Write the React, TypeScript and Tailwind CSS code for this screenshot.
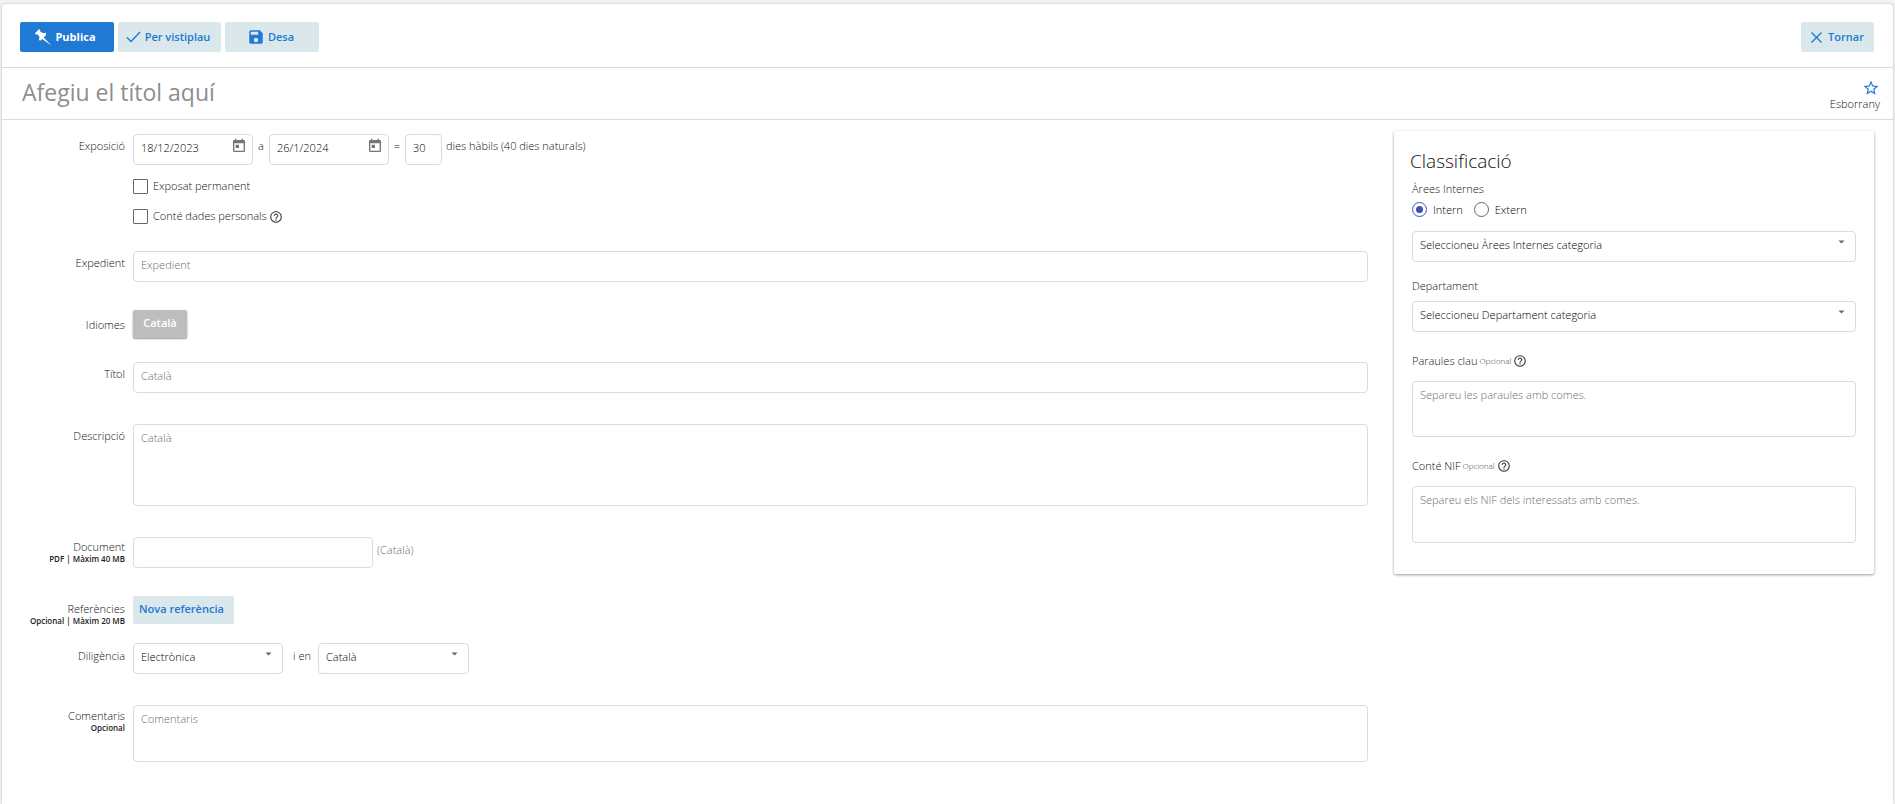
import React, { useState } from 'react';
import clsx from 'clsx';
import { MdHelpOutline, MdSave, MdStarBorder, MdToday } from 'react-icons/md';

const fieldClass =
  'w-full rounded border border-[#dcdcdc] bg-white px-[7px] text-[11px] text-black outline-none placeholder:text-[#6e6e6e]';
const inputClass = clsx(fieldClass, 'h-[31px] pb-[5px]');
const selectClass = clsx(fieldClass, 'h-[31px] pb-[3px] appearance-none');
const areaClass = clsx(fieldClass, 'block resize-none py-[5px] leading-4');
const headerButton = 'flex h-[30px] items-center justify-center rounded-xs text-[11px]';
const softColors = 'bg-[#dae7eb] font-semibold text-[#2079d3]';

interface FormRowProps {
  label: string;
  hint?: string;
  htmlFor?: string;
  className?: string;
  labelClassName?: string;
  children: React.ReactNode;
}

const FormRow = ({ label, hint, htmlFor, className, labelClassName = 'pt-[5px]', children }: FormRowProps) => {
  return (
    <div className={clsx('flex gap-2', className)}>
      <div className={clsx('w-[123px] shrink-0 text-right', labelClassName)}>
        <label htmlFor={htmlFor} className="block leading-[14px]">{label}</label>
        {hint && <span className="block text-[8px] leading-[10px] font-semibold text-[#222]">{hint}</span>}
      </div>
      <div className="min-w-0 flex-1">{children}</div>
    </div>
  );
};

interface SelectBoxProps {
  id: string;
  options: string[];
  label?: string;
  className?: string;
}

const SelectBox = ({ id, options, label, className }: SelectBoxProps) => {
  return (
    <div className={clsx('relative', className)}>
      <select id={id} aria-label={label} className={selectClass}>
        {options.map((option) => (
          <option key={option}>{option}</option>
        ))}
      </select>
      <svg className="pointer-events-none absolute top-[9px] right-[11px]" width="7" height="4" viewBox="0 0 7 4" fill="#666">
        <path d="M.5 .5h6L3.500 3.500z" />
      </svg>
    </div>
  );
};

const DateBox = ({ label, value }: { label: string; value: string }) => {
  return (
    <div className="relative w-[120px]">
      <input type="text" aria-label={label} defaultValue={value} className={inputClass} />
      <button type="button" aria-label="Obre el calendari" className="absolute top-1 right-[6px] text-[#757575]">
        <MdToday size={16} />
      </button>
    </div>
  );
};

const CheckBox = ({ id, label }: { id: string; label: string }) => {
  return (
    <>
      <input
        id={id}
        type="checkbox"
        className="size-[15px] appearance-none rounded-[1px] border border-[#666] bg-white checked:bg-[#3f51b5]"
      />
      <label htmlFor={id} className="ml-[5px]">{label}</label>
    </>
  );
};

const App = () => {
  const [area, setArea] = useState('Intern');

  return (
    <div className="min-h-screen bg-[#f4f4f4] px-0.5 pt-1 font-['Open_Sans',sans-serif] text-[11px] font-light text-[#111]">
      <div className="min-h-[800px] rounded-t bg-white shadow-[0_0_3px_rgba(0,0,0,0.25)]">
        <header className="flex h-16 items-center gap-1 border-b border-[#dcdcdc] pt-[3px] pr-[19px] pl-[18px]">
          <button type="button" className={clsx(headerButton, 'w-[94px] gap-[3px] bg-[#2079d3] pr-[3px] font-bold text-white')}>
            <svg width="17" height="17" viewBox="0 0 17 17" fill="currentColor">
              <path d="M4 .3l1 .5.4 2 3.200 1.500 1.900-.6.6.9-.2 1.700-2.200 2.200L16.700 16.700 7.200 10 5.200 11.700l-1.100-.6-.2-1.200.7-1.800L2.700 5.400.5 5.200 0 4.200z" />
            </svg>
            Publica
          </button>
          <button type="button" className={clsx(headerButton, softColors, 'w-[103px] gap-1 pr-[3px]')}>
            <svg width="15" height="12" viewBox="0 0 15 12" fill="none" stroke="currentColor" strokeWidth="1.400">
              <path d="M1 6.500l4 4L14 1" />
            </svg>
            Per vistiplau
          </button>
          <button type="button" className={clsx(headerButton, softColors, 'w-[94px] gap-[3px] pr-[3px]')}>
            <MdSave size={18} />
            Desa
          </button>
          <button type="button" className={clsx(headerButton, softColors, 'ml-auto w-[73px] gap-[6px]')}>
            <svg width="11" height="11" viewBox="0 0 11 11" fill="none" stroke="currentColor" strokeWidth="1.400">
              <path d="M.5.5l10 10M10.500.5l-10 10" />
            </svg>
            Tornar
          </button>
        </header>

        <div className="flex h-[52px] items-center border-b border-[#dcdcdc] pr-[13px] pl-5">
          <input
            type="text"
            aria-label="Títol de l'anunci"
            placeholder="Afegiu el títol aquí"
            className="flex-1 pb-0.5 text-[23px] font-normal outline-none placeholder:text-[#8e8e8e]"
          />
          <div className="flex flex-col items-end pt-0.5">
            <button type="button" aria-label="Preferit" className="text-[#2079d3]">
              <MdStarBorder size={18} />
            </button>
            <span className="leading-[14px]">Esborrany</span>
          </div>
        </div>

        <main className="flex items-start gap-[26px] pt-[11px] pr-[19px]">
          <form className="min-w-0 flex-1 pt-[3px]">
            <FormRow label="Exposició">
              <div className="flex">
                <DateBox label="Data inicial" value="18/12/2023" />
                <span className="w-4 pt-[5px] text-center leading-[14px]">a</span>
                <DateBox label="Data final" value="26/1/2024" />
                <span className="w-4 pt-[5px] text-center leading-[14px]">=</span>
                <div className="w-[37px]">
                  <input type="text" aria-label="Dies hàbils" defaultValue="30" className={inputClass} />
                </div>
                <span className="pt-[5px] pl-1 leading-[14px]">dies hàbils (40 dies naturals)</span>
              </div>
              <div className="mt-[14px] flex h-[15px] items-center">
                <CheckBox id="permanent" label="Exposat permanent" />
              </div>
              <div className="mt-[15px] flex h-[15px] items-center">
                <CheckBox id="personals" label="Conté dades personals" />
                <MdHelpOutline size={14} className="ml-[2px] text-[#444]" />
              </div>
            </FormRow>

            <FormRow label="Expedient" htmlFor="expedient" className="mt-[27px]">
              <input id="expedient" type="text" placeholder="Expedient" className={inputClass} />
            </FormRow>

            <FormRow label="Idiomes" className="mt-7" labelClassName="pt-2">
              <button type="button" className="block h-7 w-[54px] rounded-xs bg-[#bdbdbd] pb-[2px] text-[11px] font-semibold text-white shadow-[0_1px_2px_rgba(0,0,0,0.4)]">
                Català
              </button>
            </FormRow>

            <FormRow label="Títol" htmlFor="titol" className="mt-6">
              <input id="titol" type="text" placeholder="Català" className={inputClass} />
            </FormRow>

            <FormRow label="Descripció" htmlFor="descripcio" className="mt-[31px]">
              <textarea id="descripcio" placeholder="Català" className={clsx(areaClass, 'h-[82px]')} />
            </FormRow>

            <FormRow label="Document" hint="PDF | Màxim 40 MB" htmlFor="document" className="mt-[31px]" labelClassName="pt-[3px]">
              <div className="flex">
                <div className="w-60">
                  <input id="document" type="text" className={inputClass} />
                </div>
                <span className="pt-[6px] pl-1 leading-[14px] text-[#6e6e6e]">(Català)</span>
              </div>
            </FormRow>

            <FormRow label="Referències" hint="Opcional | Màxim 20 MB" className="mt-7" labelClassName="pt-[6px]">
              <button type="button" className="block h-7 w-[101px] rounded-xs bg-[#dae7eb] pb-[2px] pl-[6px] text-left text-[11px] font-semibold text-[#2079d3]">
                Nova referència
              </button>
            </FormRow>

            <FormRow label="Diligència" htmlFor="diligencia" className="mt-[17px]" labelClassName="pt-[6px]">
              <div className="flex">
                <SelectBox id="diligencia" options={['Electrònica']} className="w-[150px]" />
                <span className="w-[35px] pt-[6px] pl-[3px] text-center leading-[14px]">i en</span>
                <SelectBox id="idioma" label="Idioma" options={['Català']} className="w-[151px]" />
              </div>
            </FormRow>

            <FormRow label="Comentaris" hint="Opcional" htmlFor="comentaris" className="mt-[31px]" labelClassName="pt-1">
              <textarea id="comentaris" placeholder="Comentaris" className={clsx(areaClass, 'h-[57px]')} />
            </FormRow>
          </form>

          <aside className="w-[480px] shrink-0 rounded-xs bg-white px-4 pt-[18px] pb-[31px] shadow-[0_1px_3px_rgba(0,0,0,0.4)]">
            <h2 className="text-[19px] leading-6">Classificació</h2>
            <div className="px-0.5">
              <p className="mt-[9px] leading-[14px]">Àrees Internes</p>
              <div className="mt-[6px] flex items-center">
                {['Intern', 'Extern'].map((name) => (
                  <label key={name} className="mr-[11px] flex items-center gap-[6px] leading-[15px] text-black">
                    <input
                      type="radio"
                      name="area"
                      checked={area === name}
                      onChange={() => setArea(name)}
                      className="size-[15px] appearance-none rounded-full border border-[#666] bg-white bg-clip-content p-[3px] checked:border-[#3f51b5] checked:bg-[#3f51b5]"
                    />
                    {name}
                  </label>
                ))}
              </div>
              <SelectBox id="arees" label="Àrees Internes" options={['Seleccioneu Àrees Internes categoria']} className="mt-[14px]" />

              <label htmlFor="departament" className="mt-[17px] block leading-[14px]">Departament</label>
              <SelectBox id="departament" options={['Seleccioneu Departament categoria']} className="mt-2" />

              <div className="mt-[22px] flex items-center leading-[14px]">
                <label htmlFor="paraules">Paraules clau</label>
                <span className="ml-[2px] text-[8px] text-[#444]">Opcional</span>
                <MdHelpOutline size={14} className="ml-[2px] text-[#444]" />
              </div>
              <textarea id="paraules" placeholder="Separeu les paraules amb comes." className={clsx(areaClass, 'mt-[13px] h-[56px]')} />

              <div className="mt-[22px] flex items-center leading-[14px]">
                <label htmlFor="nif">Conté NIF</label>
                <span className="ml-[2px] text-[8px] text-[#444]">Opcional</span>
                <MdHelpOutline size={14} className="ml-[2px] text-[#444]" />
              </div>
              <textarea id="nif" placeholder="Separeu els NIF dels interessats amb comes." className={clsx(areaClass, 'mt-[13px] h-[57px]')} />
            </div>
          </aside>
        </main>
      </div>
    </div>
  );
};

export default App;
